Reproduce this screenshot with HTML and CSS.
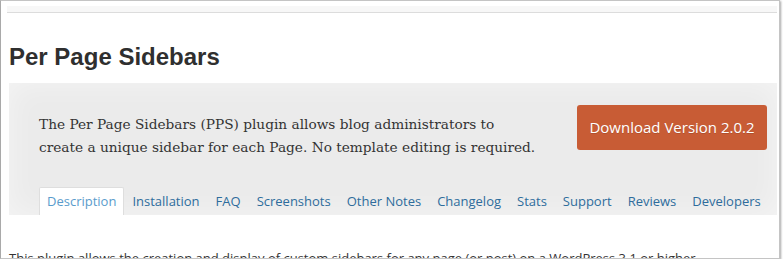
FILE: index.html
```html
<!DOCTYPE html>
<html>
  <head>
    <title>Per Page Sidebars</title>
    <meta name="viewport" content="width=device-width, initial-scale=1.0" />
    <link rel="stylesheet" href="styles.css">
  </head>

  <body>
    <div class="window">
      <div class="top-bar"></div>
      <div class="plugin">
        <h1 class="plugin-title">Per Page Sidebars</h1>
        <div class="banner">
          <div class="banner-top">
            <p class="summary">
              The Per Page Sidebars (PPS) plugin allows blog administrators to<br>
              create a unique sidebar for each Page. No template editing is required.
            </p>
            <a class="download" href="#">Download Version 2.0.2</a>
          </div>
          <ul class="tabs">
            <li class="tab active"><a href="#">Description</a></li>
            <li class="tab"><a href="#">Installation</a></li>
            <li class="tab"><a href="#">FAQ</a></li>
            <li class="tab"><a href="#">Screenshots</a></li>
            <li class="tab"><a href="#">Other Notes</a></li>
            <li class="tab"><a href="#">Changelog</a></li>
            <li class="tab"><a href="#">Stats</a></li>
            <li class="tab"><a href="#">Support</a></li>
            <li class="tab"><a href="#">Reviews</a></li>
            <li class="tab"><a href="#">Developers</a></li>
          </ul>
        </div>
        <p class="intro">
          This plugin allows the creation and display of custom sidebars for any page (or post) on a WordPress 3.1 or higher
        </p>
      </div>
    </div>
  </body>
</html>
```

FILE: styles.css
```css
* {
  box-sizing: border-box;
}
body {
  margin: 0;
  background: #fff;
  font-family: "Open Sans", sans-serif;
}
.window {
  width: 780px;
  height: 259px;
  border: 1px solid #c4c4c4;
  border-left-color: #a9a9a9;
  box-shadow: 1px 1px 2px rgba(0, 0, 0, 0.35);
  background: #fff;
  overflow: hidden;
  padding: 5px 2px 0 6px;
}
.top-bar {
  height: 7px;
  background: #f7f7f7;
  border-bottom: 1px solid #dcdcdc;
}
.plugin {
  margin-left: 2px;
}
.plugin-title {
  margin: 30px 0 12px;
  font-family: "Liberation Sans", Arial, sans-serif;
  font-size: 24px;
  line-height: 28px;
  font-weight: bold;
  color: #2f2f2f;
}
.banner {
  background: #ebebeb;
  box-shadow: inset 0 0 30px rgba(255, 255, 255, 0.5);
  padding: 22px 10px 0 30px;
}
.banner-top {
  display: flex;
  justify-content: space-between;
  align-items: flex-start;
}
.summary {
  margin: 0;
  padding-top: 8px;
  font-family: "DejaVu Serif", Georgia, serif;
  font-size: 13.7px;
  line-height: 23px;
  color: #333;
}
.download {
  display: block;
  width: 190px;
  height: 45px;
  line-height: 45px;
  text-align: center;
  background: #c85c35;
  border-radius: 3px;
  color: #fff;
  font-size: 15px;
  text-decoration: none;
  text-shadow: 0 1px 0 rgba(0, 0, 0, 0.15);
}
.tabs {
  display: flex;
  margin: 28px 0 0;
  padding: 0;
  list-style: none;
  white-space: nowrap;
}
.tab {
  flex: none;
}
.tab a {
  display: block;
  height: 28px;
  padding: 4px 7px 0;
  border: 1px solid transparent;
  border-bottom: 0;
  border-radius: 2px 2px 0 0;
  font-size: 13px;
  line-height: 18px;
  color: #2e6c9c;
  text-decoration: none;
}
.tab.active a {
  background: #fff;
  border-color: #dedede;
  color: #5a9ccc;
}
.intro {
  margin: 34px 0 0;
  font-size: 13px;
  line-height: 18px;
  color: #333;
  white-space: nowrap;
}
```
